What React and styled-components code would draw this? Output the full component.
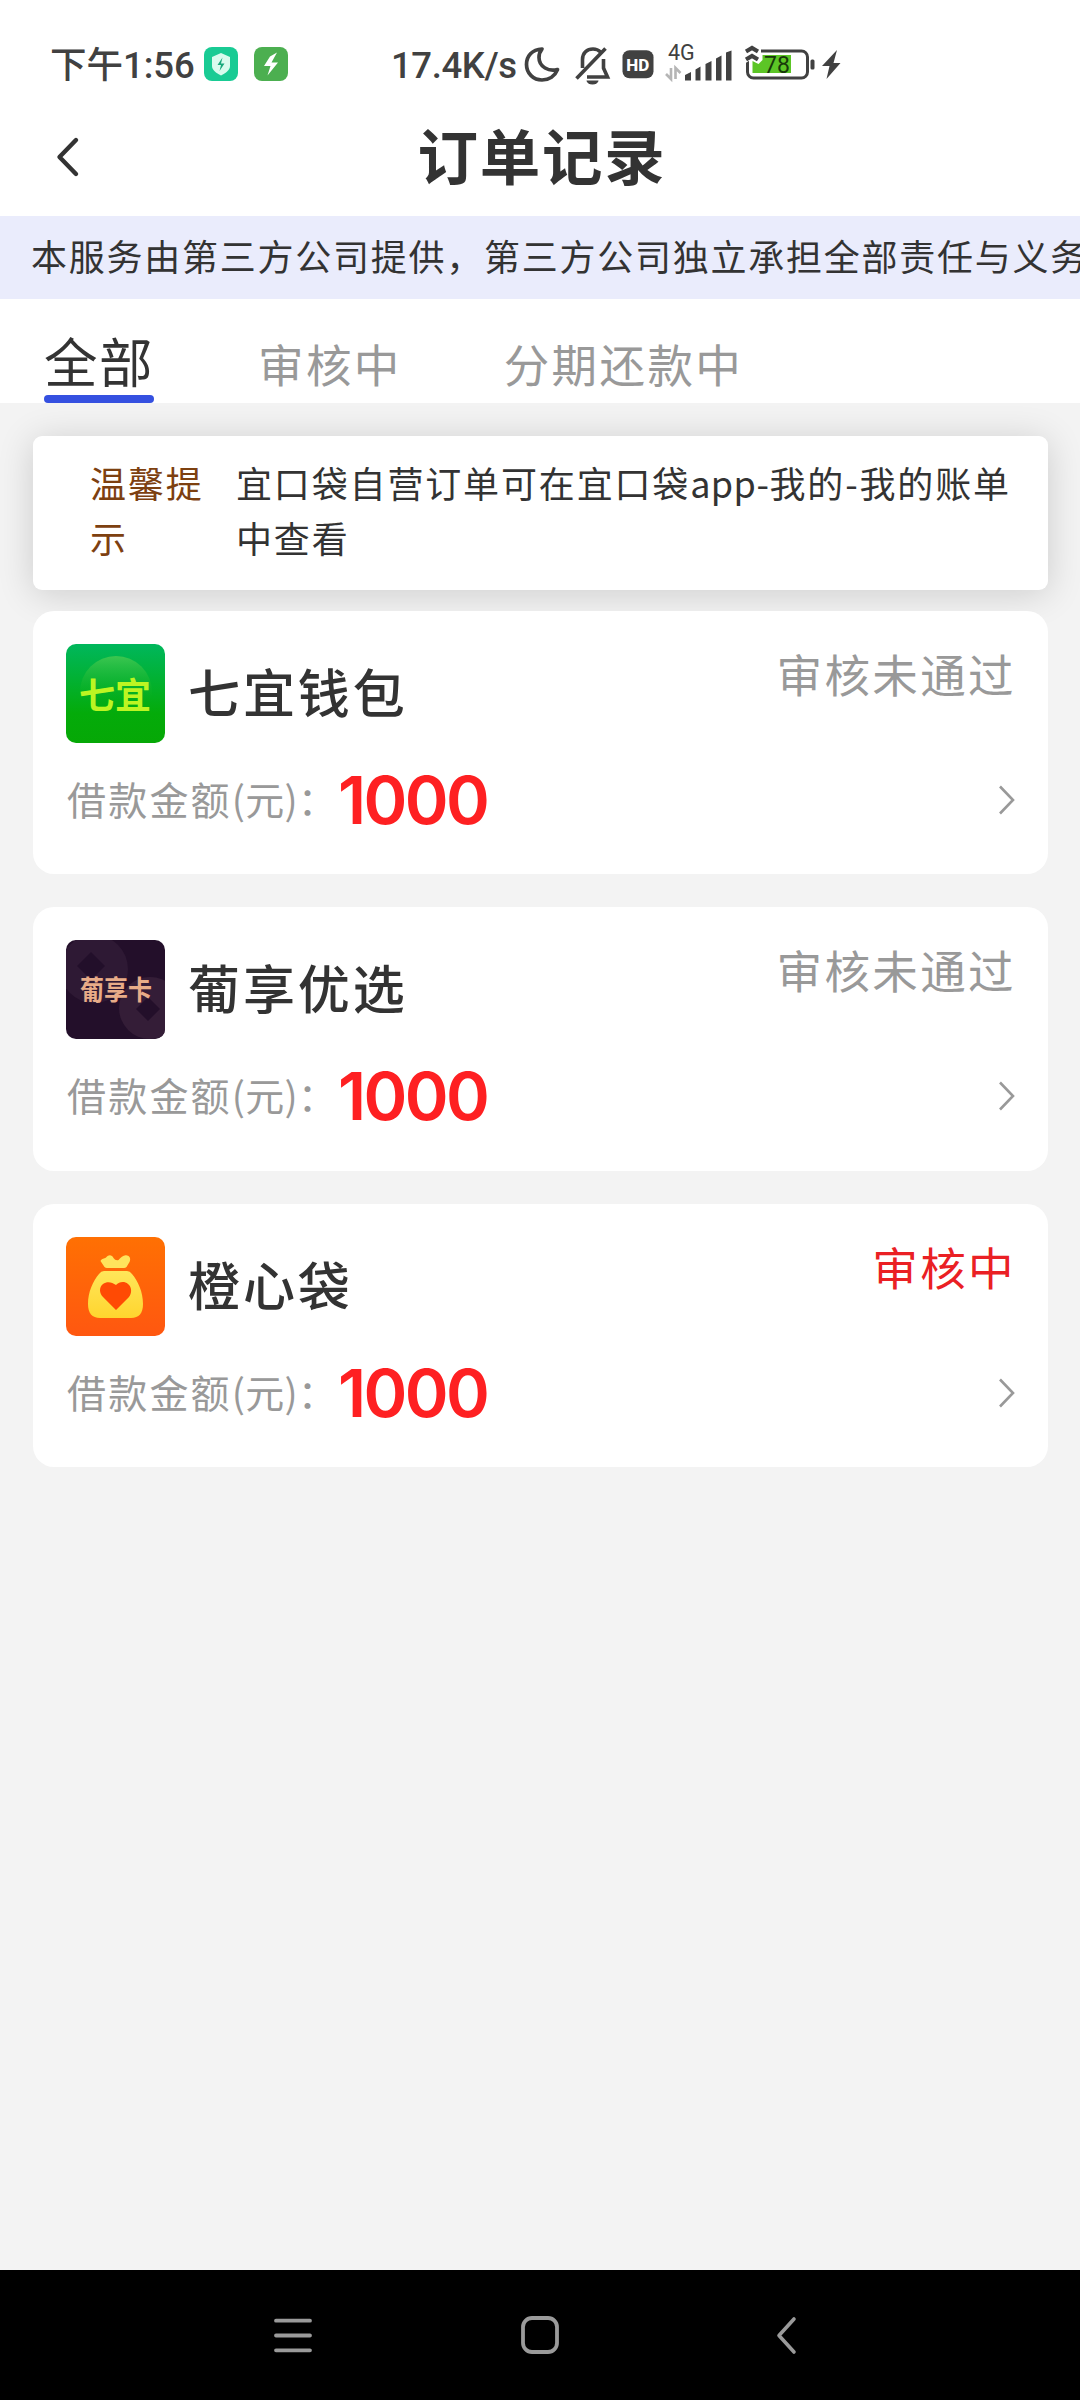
import React from 'react';
import styled, { createGlobalStyle } from 'styled-components';

const GlobalStyle = createGlobalStyle`
  * {
    box-sizing: border-box;
  }
  body {
    margin: 0;
    background: #f3f3f3;
    font-family: "Noto Sans CJK SC", sans-serif;
    color: #333;
  }
  svg {
    display: block;
    flex: none;
    overflow: visible;
  }
`;

const Screen = styled.div`
  display: flex;
  flex-direction: column;
  width: 1080px;
  height: 2400px;
  overflow: hidden;
`;

/* status bar */

const StatusBar = styled.header`
  display: flex;
  align-items: center;
  height: 98px;
  padding: 33px 0 0 50px;
  background: #fff;
  color: #414141;
`;

const Clock = styled.div`
  width: 154px;
  font: 500 36.5px/40px Roboto, "Noto Sans CJK SC", sans-serif;
  white-space: nowrap;
`;

const AppIcons = styled.div`
  display: flex;
  gap: 16px;
  width: 187px;
  margin-top: -3px;
`;

const Speed = styled.div`
  width: 133px;
  font: 500 36.5px/40px Roboto, sans-serif;
  letter-spacing: -0.4px;
  white-space: nowrap;
`;

const Indicators = styled.div`
  display: flex;
  align-items: center;
`;

const MiniText = styled.text`
  font-family: ${p => p.$family || 'Roboto, sans-serif'};
  font-size: ${p => p.$size}px;
  font-weight: ${p => p.$weight || 400};
`;

/* page header */

const TitleBar = styled.div`
  display: grid;
  grid-template-columns: 142px 1fr 138px;
  align-items: center;
  height: 118px;
  background: #fff;
`;

const BackButton = styled.button`
  padding: 0 0 0 56px;
  border: 0;
  background: none;
`;

const Title = styled.h1`
  margin: 0;
  font-size: 60.5px;
  line-height: 112px;
  height: 118px;
  font-weight: 700;
  letter-spacing: 1.8px;
  text-align: center;
`;

const Notice = styled.div`
  flex: none;
  height: 83px;
  padding-left: 31px;
  background: #eaecfc;
  font-size: 36px;
  line-height: 79px;
  letter-spacing: 1.75px;
  white-space: nowrap;
  overflow: hidden;
`;

const Tabs = styled.nav`
  display: flex;
  flex: none;
  align-items: flex-end;
  height: 104px;
  padding-left: 44px;
  background: #fff;
`;

const Tab = styled.a`
  height: 80px;
  margin-right: ${p => p.$gap || 0}px;
  color: ${p => (p.$active ? '#333' : '#999')};
  font-size: ${p => (p.$active ? 53.5 : 45.5)}px;
  line-height: ${p => (p.$active ? 74 : 80)}px;
  letter-spacing: ${p => (p.$active ? 1.5 : 2.4)}px;
  white-space: nowrap;

  &::after {
    content: "";
    display: ${p => (p.$active ? 'block' : 'none')};
    height: 8px;
    margin-top: -2px;
    border-radius: 4px;
    background: #3550e0;
  }
`;

/* content */

const Content = styled.main`
  flex: 1;
  padding: 33px 32px 0 33px;
  background: #f3f3f3;
`;

const Tip = styled.section`
  display: flex;
  height: 154px;
  padding: 19px 30px 0 57px;
  border-radius: 9px;
  background: #fff;
  box-shadow: 0 4px 36px rgba(0, 0, 0, 0.16);
  font-size: 36px;
  line-height: 55px;
  letter-spacing: 1.85px;
`;

const TipLabel = styled.div`
  flex: none;
  width: 120px;
  margin-right: 26px;
  color: #7d4010;
`;

const TipText = styled.div`
  flex: 1;
  white-space: nowrap;

  span {
    letter-spacing: 0.4px;
  }
`;

const OrderList = styled.div`
  display: flex;
  flex-direction: column;
  gap: 33px;
  margin-top: 21px;
`;

const OrderCard = styled.article`
  height: 263.4px;
  padding: 33px 32px 0 33px;
  border-radius: 21px;
  background: #fff;
`;

const OrderHead = styled.div`
  display: flex;
  height: 99px;
`;

const OrderName = styled.h2`
  flex: 1;
  margin: 0 0 0 23px;
  font-size: 52px;
  line-height: 94px;
  font-weight: 500;
  letter-spacing: 2.9px;
`;

const OrderStatus = styled.div`
  color: ${p => (p.$pending ? '#ea2024' : '#999')};
  font-size: 45.5px;
  line-height: 58px;
  letter-spacing: 2.4px;
`;

const AmountRow = styled.div`
  display: flex;
  align-items: center;
  height: 114px;
`;

const AmountLabel = styled.div`
  width: 272px;
  padding: 0 0 4px 1px;
  color: #999;
  font-size: 39px;
  letter-spacing: 2.2px;
  white-space: nowrap;

  span {
    letter-spacing: 0.2px;
  }
`;

const Amount = styled.div`
  flex: 1;
  color: #fe2022;
  font: 600 66.5px/114px Inter, sans-serif;
  letter-spacing: -2.6px;
`;

/* system navigation */

const NavBar = styled.footer`
  display: grid;
  grid-template-columns: 248px 255px 21px;
  flex: none;
  height: 130px;
  padding: 46px 0 0 273px;
  background: #000;
`;

const SecurityIcon = () => (
  <svg width="34" height="34" viewBox="0 0 34 34">
    <rect width="34" height="34" rx="8" fill="#19cb94" />
    <path d="M17 6l9 4v9c0 4-4 7-9 9.500c-5-2.500-9-5.500-9-9.500v-9z" fill="#d9fbee" />
    <path d="M18.500 10.500l-5 7.500h3.500l-1.500 6 5-7.500h-3.500z" fill="#19a97c" />
  </svg>
);

const ChargeIcon = () => (
  <svg width="34" height="34" viewBox="0 0 34 34">
    <rect width="34" height="34" rx="8" fill="#4caf50" />
    <path d="M23 5.500L16 9.500L10 19h6.500l-3 9.500L24 15.500h-6.500z" fill="#fff" />
  </svg>
);

const StatusIcons = () => (
  <svg width="320" height="44" viewBox="0 0 320 44">
    {/* do not disturb */}
    <path d="M18 5C8 5.500 2.500 12 2.500 20.500C2.500 29.500 9.500 36 18 36C25 36 31 32 33.500 25.500C25 28 15 23 15 13.500Q15 8.500 18 5z" fill="none" stroke="#414141" strokeWidth="3.700" strokeLinejoin="round" />
    {/* muted bell */}
    <path d="M58.500 24V15.500C58.500 9 63 5 69 5C72 5 74.500 6 76.500 8M79.500 15V24L83.500 33H63M52.500 34.500L81.500 4.500" fill="none" stroke="#414141" strokeWidth="3.600" />
    <path d="M62.500 36.500h12a6 4 0 0 1-12 0z" fill="#414141" />
    {/* HD badge */}
    <rect x="98.500" y="6.300" width="31" height="28" rx="7" fill="#414141" />
    <MiniText $size={17} $weight={800} x="102.200" y="26.800" fill="#fff">HD</MiniText>
    {/* network */}
    <MiniText $size={21.5} $weight={400} x="144" y="16" fill="#414141">4G</MiniText>
    <path d="M147 24v11l-5-5M151.500 35V24l5 5" fill="none" stroke="#b5b5b5" strokeWidth="2.600" />
    <path d="M161 31l6-3v8.500h-6zM171.500 25.500l5-3v14h-5zM181.500 20l6-3v19.500h-6zM192 14.500l5.500-3v25H192zM202 8.500l5.500-2v30H202z" fill="#414141" />
    {/* battery */}
    <rect x="223.500" y="7" width="60" height="27" rx="6" fill="none" stroke="#414141" strokeWidth="3" />
    <path d="M228.500 17l6 3 4-4v-5h28.500v18H228.500z" fill="#5cc526" />
    <path d="M220 0h17v17l-9-2-8 5z" fill="#fff" />
    <path d="M222 7.500l6-3.500 6 3.500M222 15.500l6-3.500 6 3.500" fill="none" stroke="#414141" strokeWidth="4.200" />
    <rect x="286.500" y="15.500" width="4" height="10" rx="1.500" fill="#414141" />
    <MiniText $size={23} $weight={400} x="240" y="28.500" fill="#17380a">78</MiniText>
    <path d="M313 6l-15 16h7.500l-3 13 14-16h-7z" fill="#414141" />
  </svg>
);

const GreenLogo = () => (
  <svg width="99" height="99" viewBox="0 0 99 99">
    <defs>
      <linearGradient id="green" x1="0" y1="0" x2="0" y2="1">
        <stop offset="0" stopColor="#00b75c" />
        <stop offset="0.7" stopColor="#04ab0a" />
        <stop offset="1" stopColor="#06a806" />
      </linearGradient>
      <linearGradient id="halo" x1="0" y1="0" x2="0" y2="1">
        <stop offset="0" stopColor="#3cc650" />
        <stop offset="0.6" stopColor="#10b020" stopOpacity="0" />
      </linearGradient>
    </defs>
    <rect width="99" height="99" rx="10" fill="url(#green)" />
    <circle cx="50" cy="48" r="36" fill="url(#halo)" />
    <MiniText $family='"Noto Sans CJK SC", sans-serif' $size={36} $weight={700} x="13" y="65" fill="#bdf522">七宜</MiniText>
  </svg>
);

const PurpleLogo = () => (
  <svg width="99" height="99" viewBox="0 0 99 99">
    <defs>
      <clipPath id="card">
        <rect width="99" height="99" rx="10" />
      </clipPath>
    </defs>
    <g clipPath="url(#card)">
      <rect width="99" height="99" fill="#230f2a" />
      <circle cx="28" cy="29" r="34" fill="#2e1934" />
      <path d="M25 12l14 14-14 14-14-14z" fill="#220f2a" />
      <circle cx="84" cy="68" r="31" fill="#341d37" />
      <path d="M82 57l12 12-12 12-12-12z" fill="#230f2a" />
    </g>
    <MiniText $family='"Noto Sans CJK SC", sans-serif' $size={27} $weight={700} x="14" y="60" textLength="72" lengthAdjust="spacingAndGlyphs" fill="#e8ac88">葡享卡</MiniText>
  </svg>
);

const OrangeLogo = () => (
  <svg width="99" height="99" viewBox="0 0 99 99">
    <defs>
      <linearGradient id="orange" x1="0" y1="0" x2="0" y2="1">
        <stop offset="0" stopColor="#ff7003" />
        <stop offset="1" stopColor="#ff5710" />
      </linearGradient>
      <linearGradient id="bag" x1="0" y1="0" x2="0" y2="1">
        <stop offset="0" stopColor="#ffe65a" />
        <stop offset="1" stopColor="#ffd52e" />
      </linearGradient>
    </defs>
    <rect width="99" height="99" rx="10" fill="url(#orange)" />
    <path d="M38.500 30L34.500 24C36 21 38 22 40 20.500C43 17 46 18 47.500 21Q49.500 24 52.500 23C55 20 58 17.500 61 18.500C64 19 65 22 63.500 25L60.500 30Q59.500 31 58 31H41Q39.500 31 38.500 30z" fill="#ffe45c" />
    <path d="M38 34H61Q64 34 66 37C72 44 77 55 77 67C77 76 73 81 65 81H34C26 81 22 76 22 67C22 55 27 44 33 37Q35 34 38 34z" fill="url(#bag)" />
    <path d="M50 73L37 60C33 56 33 50 37 47C41 44 46 45 50 48C53 45 58 43.500 62 47C66 50 66 56 63 60z" fill="#ff4a04" />
  </svg>
);

const Arrow = () => (
  <svg width="18" height="32" viewBox="0 0 18 32">
    <path d="M2 2.500L15 16L2 29.500" fill="none" stroke="#999" strokeWidth="2.600" />
  </svg>
);

const orders = [
  { name: '七宜钱包', status: '审核未通过', amount: 1000, Logo: GreenLogo },
  { name: '葡享优选', status: '审核未通过', amount: 1000, Logo: PurpleLogo },
  { name: '橙心袋', status: '审核中', pending: true, amount: 1000, Logo: OrangeLogo },
];

const Order = ({ name, status, pending, amount, Logo }) => (
  <OrderCard>
    <OrderHead>
      <Logo />
      <OrderName>{name}</OrderName>
      <OrderStatus $pending={pending}>{status}</OrderStatus>
    </OrderHead>
    <AmountRow>
      <AmountLabel>借款金额<span>(元)</span>：</AmountLabel>
      <Amount>{amount}</Amount>
      <Arrow />
    </AmountRow>
  </OrderCard>
);

export default function App() {
  return (
    <Screen>
      <GlobalStyle />
      <StatusBar>
        <Clock>下午1:56</Clock>
        <AppIcons>
          <SecurityIcon />
          <ChargeIcon />
        </AppIcons>
        <Speed>17.4K/s</Speed>
        <Indicators>
          <StatusIcons />
        </Indicators>
      </StatusBar>

      <TitleBar>
        <BackButton>
          <svg width="24" height="42" viewBox="0 0 24 42">
            <path d="M20 4L3.500 21L20 38" fill="none" stroke="#333" strokeWidth="4.400" strokeLinecap="round" strokeLinejoin="round" />
          </svg>
        </BackButton>
        <Title>订单记录</Title>
      </TitleBar>

      <Notice>本服务由第三方公司提供，第三方公司独立承担全部责任与义务</Notice>

      <Tabs>
        <Tab $active $gap={104}>全部</Tab>
        <Tab $gap={102}>审核中</Tab>
        <Tab>分期还款中</Tab>
      </Tabs>

      <Content>
        <Tip>
          <TipLabel>温馨提示</TipLabel>
          <TipText>
            宜口袋自营订单可在宜口袋<span>app-</span>我的-我的账单<br />中查看
          </TipText>
        </Tip>
        <OrderList>
          {orders.map(order => (
            <Order key={order.name} {...order} />
          ))}
        </OrderList>
      </Content>

      <NavBar>
        <svg width="39" height="38" viewBox="0 0 39 38">
          <path d="M3 4.700H37M3 19.500H37M3 34.300H37" stroke="#9a9a9a" strokeWidth="3.800" strokeLinecap="round" />
        </svg>
        <svg width="38" height="38" viewBox="0 0 38 38">
          <rect x="2" y="2" width="34" height="34" rx="9" fill="none" stroke="#9a9a9a" strokeWidth="3.800" />
        </svg>
        <svg width="21" height="38" viewBox="0 0 21 38">
          <path d="M18 3L3 19.500L18 36" fill="none" stroke="#9a9a9a" strokeWidth="3.600" strokeLinecap="round" strokeLinejoin="round" />
        </svg>
      </NavBar>
    </Screen>
  );
}
